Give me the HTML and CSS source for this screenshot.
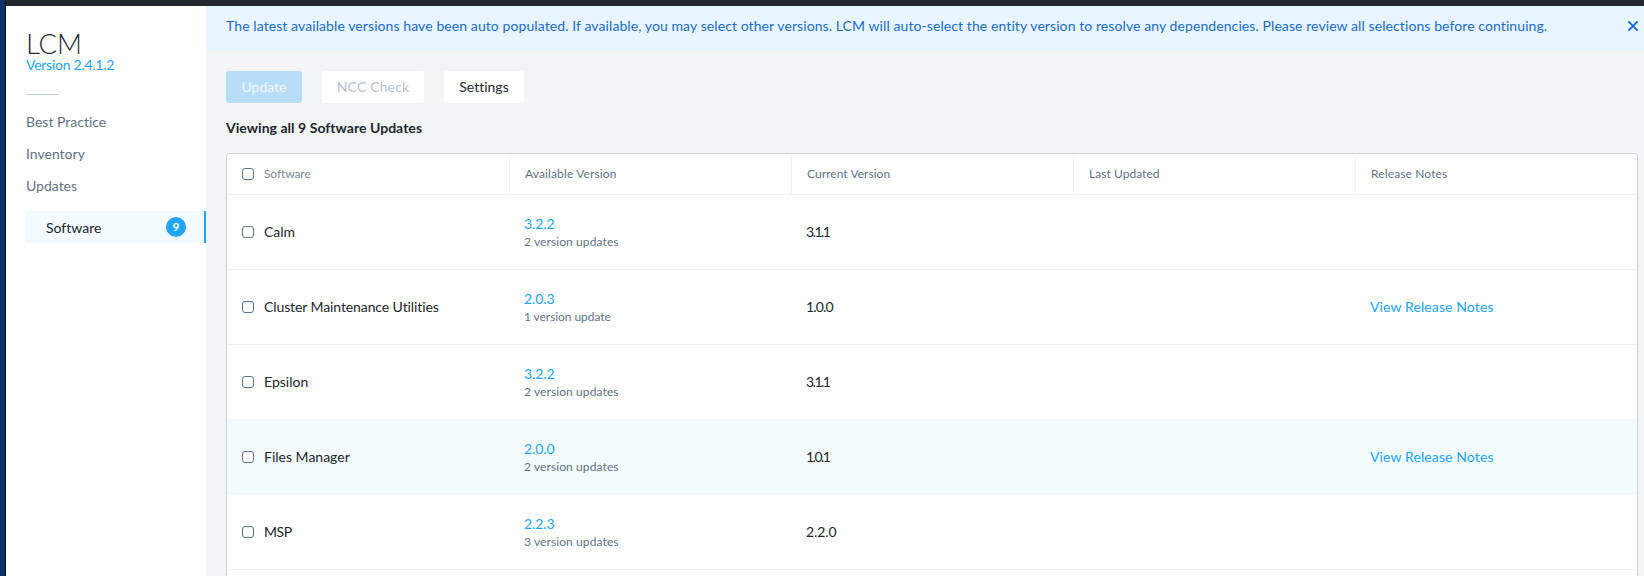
FILE: index.html
```html
<!DOCTYPE html>
<html lang="en">
<head>
<meta charset="utf-8">
<title>LCM</title>
<link rel="stylesheet" href="styles.css">
</head>
<body>
<div class="window">
  <div class="topbar"></div>
  <div class="shell">
    <nav class="sidebar">
      <h1 class="brand">LCM</h1>
      <a class="release">Version 2.4.1.2</a>
      <hr class="rule">
      <a class="nav-link">Best Practice</a>
      <a class="nav-link">Inventory</a>
      <a class="nav-link">Updates</a>
      <a class="nav-sub"><span class="nav-text">Software</span><b class="badge">9</b></a>
    </nav>
    <main class="main">
      <div class="banner">
        <span>The latest available versions have been auto populated. If available, you may select other versions. LCM will auto-select the entity version to resolve any dependencies. Please review all selections before continuing.</span>
        <svg class="close" viewBox="0 0 12 12"><path d="M1.4 1.4 10.6 10.6M10.6 1.4 1.4 10.6"/></svg>
      </div>
      <div class="content">
        <div class="actions">
          <button class="btn btn-primary">Update</button>
          <button class="btn btn-muted">NCC Check</button>
          <button class="btn">Settings</button>
        </div>
        <h2 class="summary">Viewing all 9 Software Updates</h2>
        <div class="table">
          <div class="row head">
            <div class="cell"><i class="check"></i><span class="light">Software</span></div>
            <div class="cell">Available Version</div>
            <div class="cell snug">Current Version</div>
            <div class="cell snug">Last Updated</div>
            <div class="cell">Release Notes</div>
          </div>
          <div class="row">
            <div class="cell"><i class="check"></i>Calm</div>
            <div class="cell stack"><a class="link num">3.2.2</a><small>2 version updates</small></div>
            <div class="cell tightest">3.1.1</div>
            <div class="cell"></div>
            <div class="cell"></div>
          </div>
          <div class="row">
            <div class="cell name-long"><i class="check"></i>Cluster Maintenance Utilities</div>
            <div class="cell stack"><a class="link num">2.0.3</a><small class="single">1 version update</small></div>
            <div class="cell tight">1.0.0</div>
            <div class="cell"></div>
            <div class="cell"><a class="link notes">View Release Notes</a></div>
          </div>
          <div class="row before-hover">
            <div class="cell"><i class="check"></i>Epsilon</div>
            <div class="cell stack"><a class="link num">3.2.2</a><small>2 version updates</small></div>
            <div class="cell tightest">3.1.1</div>
            <div class="cell"></div>
            <div class="cell"></div>
          </div>
          <div class="row hover">
            <div class="cell"><i class="check"></i>Files Manager</div>
            <div class="cell stack"><a class="link num">2.0.0</a><small>2 version updates</small></div>
            <div class="cell tightest">1.0.1</div>
            <div class="cell"></div>
            <div class="cell"><a class="link notes">View Release Notes</a></div>
          </div>
          <div class="row">
            <div class="cell name-caps"><i class="check"></i>MSP</div>
            <div class="cell stack"><a class="link num">2.2.3</a><small>3 version updates</small></div>
            <div class="cell num">2.2.0</div>
            <div class="cell"></div>
            <div class="cell"></div>
          </div>
          <div class="row"></div>
        </div>
      </div>
    </main>
  </div>
</div>
</body>
</html>
```
FILE: styles.css
```css
* { box-sizing: border-box; }
html { height: 576px; overflow: hidden; }
body { margin: 0; height: 576px; overflow: hidden; font: 14px/18px Lato, "Open Sans", sans-serif; font-variant-ligatures: none; color: #22272e; background: #0b3166; }
.window { height: 576px; overflow: hidden; margin-left: 5px; border-left: 1px solid #03060c; display: flex; flex-direction: column; }
.topbar { height: 6px; background: #22272f; flex: none; }
.shell { flex: 1; min-height: 0; display: flex; }
.sidebar { width: 200px; flex: none; background: #fff; padding: 25px 0 0 20px; display: flex; flex-direction: column; }
.brand { margin: 0; font-size: 27.5px; line-height: 26px; font-weight: 300; letter-spacing: -0.2px; }
.release { line-height: 16px; letter-spacing: -0.26px; color: #22a5f7; }
.rule { width: 32px; height: 1px; margin: 21px 0 11px; border: 0; background: #c6d1dd; }
.nav-link { height: 32px; line-height: 32px; color: #627386; }
.nav-sub { height: 32px; margin-top: 9px; padding: 0 18px 0 20px; display: flex; align-items: center; justify-content: space-between; background: #f3fbff; border-right: 2px solid #22a5f7; }
.nav-text { padding-top: 2px; }
.badge { width: 20px; height: 20px; border-radius: 50%; background: #22a5f7; color: #fff; font-size: 12px; line-height: 20px; text-align: center; }
.main { flex: 1; min-width: 0; background: #f2f4f6; display: flex; flex-direction: column; }
.banner { height: 45px; flex: none; padding: 11px 5px 0 20px; display: flex; justify-content: space-between; background: #e8f5ff; color: #1b6dc6; white-space: nowrap; letter-spacing: 0.088px; }
.close { width: 12px; height: 12px; margin-top: 3px; fill: none; stroke: #1b6dc6; stroke-width: 2; }
.content { flex: 1; min-height: 0; overflow: hidden; padding: 20px 6px 0 20px; }
.actions { display: flex; gap: 20px; }
.btn { width: 80px; height: 32px; padding: 0; border: 0; border-radius: 3px; background: #fff; color: #22272e; font: inherit; font-variant-ligatures: none; }
.btn-primary { width: 76px; background: #b8ddf6; color: #f2f4f6; }
.btn-muted { width: 102px; letter-spacing: 0.15px; color: #b8bfca; }
.summary { margin: 16px 0; font-size: 14px; line-height: 18px; font-weight: 700; letter-spacing: 0.04px; }
.table { border: 1px solid #d1d5da; border-radius: 4px; background: #fff; }
.row { display: grid; grid-template-columns: repeat(5, 282px); height: 75px; border-bottom: 1px solid #f0f2f4; }
.cell { display: flex; align-items: center; padding-left: 15px; }
.head { height: 41px; font-size: 12px; letter-spacing: 0.13px; color: #627386; }
.head .cell + .cell { border-left: 1px solid #f0f2f4; }
.snug { letter-spacing: 0.05px; }
.light { letter-spacing: -0.1px; color: #7b8998; }
.check { width: 12px; height: 12px; margin-right: 10px; border: 1px solid #627386; border-radius: 3px; background: #fff; }
.stack { flex-direction: column; align-items: flex-start; justify-content: center; padding-top: 2px; }
.link { color: #22a5f7; }
.notes { letter-spacing: 0.11px; }
.num { letter-spacing: -0.1px; }
.tight { letter-spacing: -0.85px; }
.tightest { letter-spacing: -1.5px; }
.name-long { letter-spacing: -0.1px; }
.name-caps { letter-spacing: -0.4px; }
small { font-size: 12px; letter-spacing: 0.1px; color: #627386; }
.single { letter-spacing: -0.06px; }
.before-hover, .hover { border-color: #f3fbff; }
.hover { background: #f3fbff; }
```
